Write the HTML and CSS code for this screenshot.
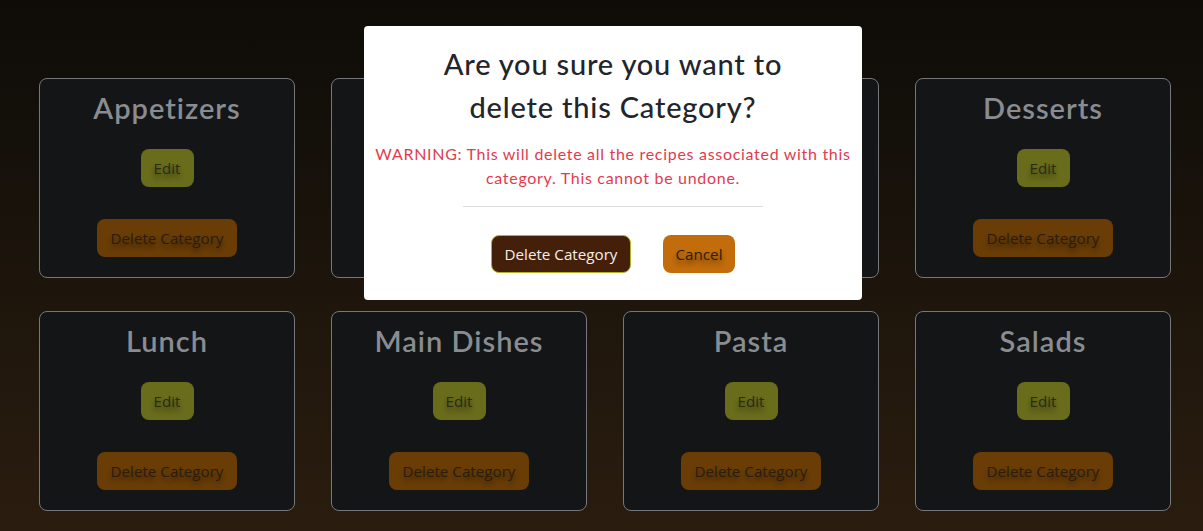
FILE: index.html
```html
<!DOCTYPE html>
<html lang="en">
<head>
<meta charset="utf-8">
<title>Categories</title>
<link rel="stylesheet" href="styles.css">
</head>
<body>
<main class="page">
  <div class="grid">
    <div class="card"><h2 class="card-title">Appetizers</h2><button class="btn btn-edit">Edit</button><button class="btn btn-delete">Delete Category</button></div>
    <div class="card"><h2 class="card-title">Breakfast</h2><button class="btn btn-edit">Edit</button><button class="btn btn-delete">Delete Category</button></div>
    <div class="card"><h2 class="card-title">Breads</h2><button class="btn btn-edit">Edit</button><button class="btn btn-delete">Delete Category</button></div>
    <div class="card"><h2 class="card-title">Desserts</h2><button class="btn btn-edit">Edit</button><button class="btn btn-delete">Delete Category</button></div>
    <div class="card"><h2 class="card-title">Lunch</h2><button class="btn btn-edit">Edit</button><button class="btn btn-delete">Delete Category</button></div>
    <div class="card"><h2 class="card-title">Main Dishes</h2><button class="btn btn-edit">Edit</button><button class="btn btn-delete">Delete Category</button></div>
    <div class="card"><h2 class="card-title">Pasta</h2><button class="btn btn-edit">Edit</button><button class="btn btn-delete">Delete Category</button></div>
    <div class="card"><h2 class="card-title">Salads</h2><button class="btn btn-edit">Edit</button><button class="btn btn-delete">Delete Category</button></div>
  </div>
</main>
<div class="modal">
  <h3 class="modal-title">Are you sure you want to delete this Category?</h3>
  <p class="modal-warning">WARNING: This will delete all the recipes associated with this category. This cannot be undone.</p>
  <hr class="modal-divider">
  <div class="modal-actions">
    <button class="btn btn-confirm">Delete Category</button>
    <button class="btn btn-cancel">Cancel</button>
  </div>
</div>
</body>
</html>
```

FILE: styles.css
```css
* { box-sizing: border-box; }
html, body { height: 100%; }
body {
  margin: 0;
  background: linear-gradient(180deg, #0f0c08 0%, #14100a 25%, #1f160c 60%, #2a1d0f 100%);
  font-family: "Open Sans", "Noto Sans", sans-serif;
  overflow: hidden;
}
.page {
  padding: 78px 0 0 39px;
}
.grid {
  display: grid;
  grid-template-columns: repeat(4, 256px);
  column-gap: 36px;
  row-gap: 33px;
}
.card {
  height: 200px;
  background: #131517;
  border: 1px solid #76777a;
  border-radius: 8px;
  display: flex;
  flex-direction: column;
  align-items: center;
  padding-top: 9px;
}
.card-title {
  margin: 0;
  font-family: "Lato", "Noto Sans", sans-serif;
  font-weight: 600;
  font-size: 29px;
  line-height: 40px;
  color: #898c91;
  letter-spacing: 1px;
}
.btn {
  font-family: "Open Sans", "Noto Sans", sans-serif;
  font-size: 15.2px;
  height: 38px;
  border: none;
  border-radius: 8px;
  padding: 0;
  cursor: pointer;
  text-shadow: 0 4px 5px rgba(0,0,0,0.45);
}
.btn-edit {
  margin-top: 21px;
  background: #696c1b;
  color: #2a2c16;
  width: 53px;
}
.btn-delete {
  margin-top: 32px;
  background: #6a3d07;
  color: #2b1d0e;
  width: 140px;
}
.modal {
  position: fixed;
  left: 364px;
  top: 26px;
  width: 498px;
  height: 274px;
  background: #ffffff;
  border-radius: 4px;
  display: flex;
  flex-direction: column;
  align-items: center;
  padding-top: 16px;
  text-align: center;
}
.modal-title {
  margin: 0;
  font-family: "Lato", "Noto Sans", sans-serif;
  font-weight: 500;
  font-size: 29px;
  line-height: 43px;
  color: #23252a;
  letter-spacing: 0.8px;
  max-width: 380px;
}
.modal-warning {
  margin: 14px 0 0;
  font-family: "Lato", "Noto Sans", sans-serif;
  font-size: 16px;
  line-height: 24px;
  letter-spacing: 0.7px;
  color: #e23b4e;
  padding: 0 8px;
}
.modal-divider {
  width: 300px;
  border: none;
  border-top: 1px solid #dcdcdc;
  margin: 16px 0 0;
}
.modal-actions {
  display: flex;
  gap: 32px;
  margin-top: 28px;
}
.btn-confirm {
  width: 140px;
  background: #44200b;
  color: #f4efe9;
  border: 1px solid #b3b32a;
  text-shadow: none;
}
.btn-cancel {
  width: 72px;
  background: #c26c0b;
  color: #2b1d10;
}
```
